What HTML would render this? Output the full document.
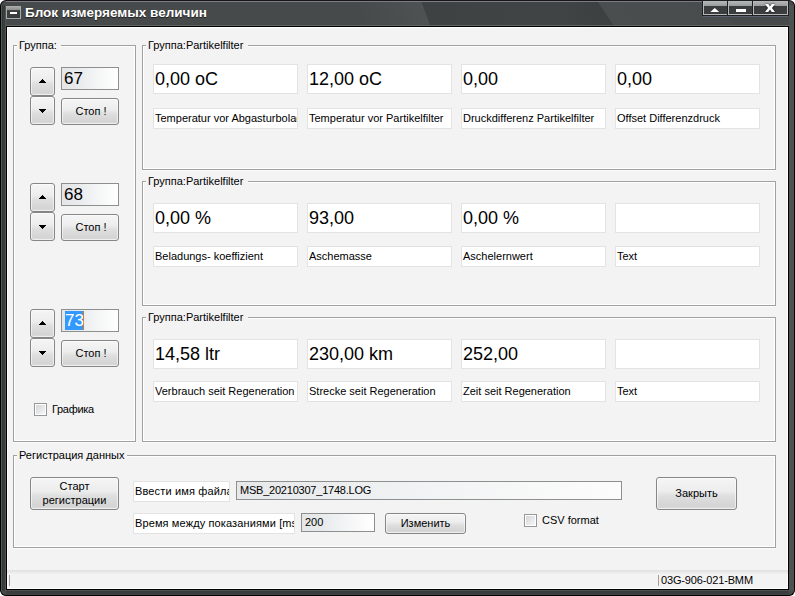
<!DOCTYPE html>
<html><head><meta charset="utf-8">
<style>
*{box-sizing:border-box;margin:0;padding:0}
html,body{width:795px;height:596px;overflow:hidden;background:#fff;font-family:"Liberation Sans",sans-serif;font-size:11px;color:#000}
.a{position:absolute}
#win{left:0;top:0;width:795px;height:596px;background:#474a4a;border:1px solid #000;border-top-color:#1c121c;border-radius:6px;overflow:hidden}
#client{left:6px;top:26px;width:783px;height:564px;border:1px solid #000;background:#f3f3f3}
#client .in{left:0;top:0;right:0;bottom:0;border:1px solid #fff}
.grp{border:1px solid #a0a0a0;box-shadow:0 1px 0 #fbfbfb, inset 0 0 0 1px #fff}
.lg{background:#f3f3f3;padding:0 4px 0 2px;line-height:13px;white-space:nowrap}
.btn{border:1px solid #868686;border-radius:3px;background:linear-gradient(#f5f5f5 0%,#ededed 42%,#dfdfdf 58%,#d4d4d4 90%,#dcdcdc 100%);box-shadow:inset 0 0 0 1px rgba(255,255,255,.55);text-align:center;white-space:nowrap}
.inp{border:1px solid #8e8f8f;border-radius:0;background:linear-gradient(90deg,#e5e6e8 0%,#e9eaec 30%,#f3f4f5 60%,#fcfcfc 88%,#fff 100%)}
.vbox{background:#fff;border:1px solid #e3e3e3;overflow:hidden;white-space:nowrap}
.val{font-size:18px;padding-left:1px;line-height:28px}
.lab{padding-left:1px;line-height:19px}
.chk{width:13px;height:13px;border:1px solid #979797;background:#fff}
.chk i{position:absolute;left:1px;top:1px;width:9px;height:9px;background:linear-gradient(135deg,#d3d6d9,#f6f6f7)}
.tri-up{width:7px;height:4px;background:linear-gradient(#000,#000) 3px 0/1px 1px no-repeat,linear-gradient(#000,#000) 2px 1px/3px 1px no-repeat,linear-gradient(#000,#000) 1px 2px/5px 1px no-repeat,linear-gradient(#000,#000) 0 3px/7px 1px no-repeat}
.tri-dn{width:7px;height:4px;background:linear-gradient(#000,#000) 3px 3px/1px 1px no-repeat,linear-gradient(#000,#000) 2px 2px/3px 1px no-repeat,linear-gradient(#000,#000) 1px 1px/5px 1px no-repeat,linear-gradient(#000,#000) 0 0/7px 1px no-repeat}
.tb{border:1px solid #b4b7b7;box-shadow:0 0 0 1px #1e2121;background:linear-gradient(#b0b3b3 0,#999c9c 4px,#3a3d3d 4px,#3b3e3e 100%)}
</style></head><body>
<div id="win" class="a"></div>
  <div class="a" style="left:1px;top:5px;width:5px;height:586px;background:linear-gradient(90deg,#4d5c57 0,#4d5c57 1px,#2f3a36 1px,#2f3a36 2px,#3d3d3d 2px,#3d3d3d 4px,#505353 4px)"></div>
  <div class="a" style="left:789px;top:5px;width:5px;height:586px;background:#4e5151"></div>
  <div class="a" style="left:6px;top:590px;width:783px;height:5px;background:linear-gradient(#4e5050 0,#4e5050 1px,#3a3d3d 1px,#3a3d3d 4px,#404343 4px)"></div>
  <div class="a" style="left:6px;top:2px;width:783px;height:23px;overflow:hidden">
    <div class="a" style="left:352px;top:-5px;width:70px;height:40px;background:linear-gradient(90deg,#474a4a,#4e5252);transform:skewX(20deg)"></div>
    <div class="a" style="left:421px;top:-5px;width:190px;height:40px;background:linear-gradient(90deg,#3f4242,#414444 70%,#3d4040 95%,#404343);transform:skewX(20deg)"></div>
    <div class="a" style="left:602px;top:-5px;width:120px;height:40px;background:linear-gradient(90deg,#4b4e4e,#494c4c);transform:skewX(34deg)"></div>
  </div>
  <!-- title highlight -->
  <div class="a" style="left:6px;top:1px;width:783px;height:1px;background:#7b7f80"></div>
  <div class="a" style="left:6px;top:25px;width:783px;height:1px;background:#626666"></div>
  <!-- icon -->
  <div class="a" style="left:6px;top:6px;width:15px;height:13px;border:1px solid #a9abab;background:linear-gradient(#a5a7a7 0%,#8a8c8c 30%,#3b3e3e 32%,#3b3e3e 100%)">
    <div class="a" style="left:3px;top:5px;width:7px;height:2px;background:#fff"></div>
  </div>
  <div class="a" style="left:25px;top:5px;font-size:13.5px;font-weight:bold;color:#fff;text-shadow:0 1px 1px rgba(0,0,0,.6);line-height:16px;white-space:nowrap">Блок измеряемых величин</div>
  <!-- title buttons -->
  <div class="a" style="left:703px;top:16px;width:85px;height:1px;background:#586070"></div>
  <div class="a tb" style="left:703px;top:1px;width:25px;height:14px"><svg class="a" style="left:6px;top:6px" width="10" height="4" viewBox="0 0 10 4"><polygon points="0.3,4 4.75,0 9.2,4" fill="#fff"/></svg></div>
  <div class="a tb" style="left:728px;top:1px;width:25px;height:14px"><div class="a" style="left:7px;top:7px;width:10px;height:3px;background:#fff"></div></div>
  <div class="a tb" style="left:753px;top:1px;width:35px;height:14px"><svg class="a" style="left:11px;top:2px;filter:drop-shadow(0 0 0.8px #1a1c1c)" width="10" height="8" viewBox="0 0 10 8"><polygon points="0,0 3.2,0 5,2.5 6.8,0 10,0 6.9,4 10,8 6.8,8 5,5.5 3.2,8 0,8 3.1,4" fill="#fff"/></svg></div>

  <div id="client" class="a"><div class="a in"></div></div>

<!-- Left group -->
<div class="a grp" style="left:13px;top:45px;width:123px;height:397px"></div>
<div class="a lg" style="left:17px;top:39px">Группа:</div>

<!-- Right groups -->
<div class="a grp" style="left:142px;top:45px;width:634px;height:125px"></div>
<div class="a lg" style="left:146px;top:39px;padding-right:5px">Группа:Partikelfilter</div>
<div class="a grp" style="left:142px;top:181px;width:634px;height:125px"></div>
<div class="a lg" style="left:146px;top:175px;padding-right:5px">Группа:Partikelfilter</div>
<div class="a grp" style="left:142px;top:317px;width:634px;height:125px"></div>
<div class="a lg" style="left:146px;top:311px;padding-right:5px">Группа:Partikelfilter</div>

<!-- spin controls group 1 -->
<div class="a btn" style="left:30px;top:67px;width:25px;height:29px"><div class="a tri-up" style="left:8px;top:11px"></div></div>
<div class="a btn" style="left:30px;top:96px;width:25px;height:29px"><div class="a tri-dn" style="left:8px;top:12px"></div></div>
<div class="a inp" style="left:61px;top:67px;width:58px;height:23px"><div class="a" style="left:2px;top:2px;font-size:17px;line-height:18px">67</div></div>
<div class="a btn" style="left:61px;top:98px;width:58px;height:27px;line-height:25px;padding-left:2px">Стоп !</div>

<div class="a btn" style="left:30px;top:183px;width:25px;height:29px"><div class="a tri-up" style="left:8px;top:11px"></div></div>
<div class="a btn" style="left:30px;top:212px;width:25px;height:29px"><div class="a tri-dn" style="left:8px;top:12px"></div></div>
<div class="a inp" style="left:61px;top:183px;width:58px;height:23px"><div class="a" style="left:2px;top:2px;font-size:17px;line-height:18px">68</div></div>
<div class="a btn" style="left:61px;top:214px;width:58px;height:27px;line-height:25px;padding-left:2px">Стоп !</div>

<div class="a btn" style="left:30px;top:309px;width:25px;height:29px"><div class="a tri-up" style="left:8px;top:11px"></div></div>
<div class="a btn" style="left:30px;top:338px;width:25px;height:29px"><div class="a tri-dn" style="left:8px;top:12px"></div></div>
<div class="a inp" style="left:61px;top:309px;width:58px;height:23px"><div class="a" style="left:3px;top:1px;width:19px;height:19px;background:#3399ff;border-right:1px solid #d8761a"></div><div class="a" style="left:3px;top:2px;font-size:17px;line-height:18px;color:#fff">73</div></div>
<div class="a btn" style="left:61px;top:340px;width:58px;height:27px;line-height:25px;padding-left:2px">Стоп !</div>

<div class="a chk" style="left:34px;top:403px"><i></i></div>
<div class="a" style="left:52px;top:403px;line-height:13px;letter-spacing:-0.3px">Графика</div>

<!-- value boxes group 1 -->
<div class="a vbox val" style="left:153px;top:64px;width:145px;height:30px">0,00 oC</div>
<div class="a vbox val" style="left:307px;top:64px;width:145px;height:30px">12,00 oC</div>
<div class="a vbox val" style="left:461px;top:64px;width:145px;height:30px">0,00</div>
<div class="a vbox val" style="left:615px;top:64px;width:145px;height:30px">0,00</div>
<div class="a vbox lab" style="left:153px;top:108px;width:145px;height:21px">Temperatur vor Abgasturbolader</div>
<div class="a vbox lab" style="left:307px;top:108px;width:145px;height:21px">Temperatur vor Partikelfilter</div>
<div class="a vbox lab" style="left:461px;top:108px;width:145px;height:21px">Druckdifferenz Partikelfilter</div>
<div class="a vbox lab" style="left:615px;top:108px;width:145px;height:21px">Offset Differenzdruck</div>

<!-- group 2 -->
<div class="a vbox val" style="left:153px;top:203px;width:145px;height:30px">0,00 %</div>
<div class="a vbox val" style="left:307px;top:203px;width:145px;height:30px">93,00</div>
<div class="a vbox val" style="left:461px;top:203px;width:145px;height:30px">0,00 %</div>
<div class="a vbox val" style="left:615px;top:203px;width:145px;height:30px"></div>
<div class="a vbox lab" style="left:153px;top:246px;width:145px;height:21px">Beladungs- koeffizient</div>
<div class="a vbox lab" style="left:307px;top:246px;width:145px;height:21px">Aschemasse</div>
<div class="a vbox lab" style="left:461px;top:246px;width:145px;height:21px">Aschelernwert</div>
<div class="a vbox lab" style="left:615px;top:246px;width:145px;height:21px">Text</div>

<!-- group 3 -->
<div class="a vbox val" style="left:153px;top:339px;width:145px;height:30px">14,58 ltr</div>
<div class="a vbox val" style="left:307px;top:339px;width:145px;height:30px">230,00 km</div>
<div class="a vbox val" style="left:461px;top:339px;width:145px;height:30px">252,00</div>
<div class="a vbox val" style="left:615px;top:339px;width:145px;height:30px"></div>
<div class="a vbox lab" style="left:153px;top:381px;width:145px;height:21px">Verbrauch seit Regeneration</div>
<div class="a vbox lab" style="left:307px;top:381px;width:145px;height:21px">Strecke seit Regeneration</div>
<div class="a vbox lab" style="left:461px;top:381px;width:145px;height:21px">Zeit seit Regeneration</div>
<div class="a vbox lab" style="left:615px;top:381px;width:145px;height:21px">Text</div>

<!-- registration group -->
<div class="a grp" style="left:13px;top:455px;width:763px;height:93px"></div>
<div class="a lg" style="left:17px;top:449px;padding-right:3px">Регистрация данных</div>
<div class="a btn" style="left:30px;top:477px;width:89px;height:33px;line-height:14px;padding-top:1px">Старт<br>регистрации</div>
<div class="a vbox lab" style="left:133px;top:481px;width:97px;height:21px;letter-spacing:0.15px">Ввести имя файла</div>
<div class="a inp" style="left:236px;top:481px;width:386px;height:19px;background:linear-gradient(90deg,#e6e8ea 0%,#f2f3f4 50%,#fcfcfc 100%)"><div class="a" style="left:3px;top:2px;line-height:13px;letter-spacing:-0.22px">MSB_20210307_1748.LOG</div></div>
<div class="a vbox lab" style="left:133px;top:513px;width:162px;height:21px;letter-spacing:0.12px">Время между показаниями [ms]</div>
<div class="a inp" style="left:301px;top:513px;width:74px;height:19px"><div class="a" style="left:3px;top:2px;line-height:13px">200</div></div>
<div class="a btn" style="left:385px;top:513px;width:81px;height:21px;line-height:19px">Изменить</div>
<div class="a chk" style="left:524px;top:514px"><i></i></div>
<div class="a" style="left:542px;top:514px;line-height:13px">CSV format</div>
<div class="a btn" style="left:656px;top:477px;width:81px;height:33px;line-height:31px">Закрыть</div>

<!-- status bar -->
<div class="a" style="left:7px;top:570px;width:781px;height:4px;background:linear-gradient(#dfdfdf,#f1f1f1)"></div>
<div class="a" style="left:9px;top:575px;width:1px;height:11px;background:#a0a0a0"></div>
<div class="a" style="left:658px;top:575px;width:1px;height:11px;background:#a0a0a0"></div>
<div class="a" style="left:661px;top:574px;line-height:13px;white-space:nowrap;letter-spacing:-0.15px">03G-906-021-BMM</div>
</body></html>
